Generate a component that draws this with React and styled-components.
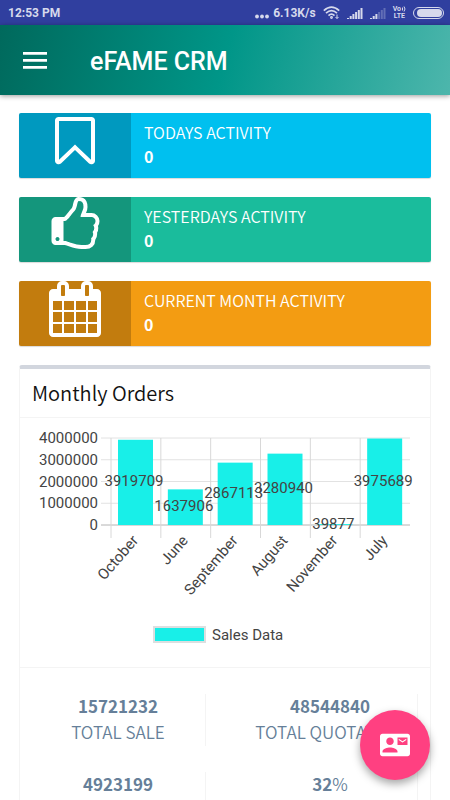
import React from 'react';
import styled, { createGlobalStyle } from 'styled-components';
import { MdContactMail } from 'react-icons/md';

const GlobalStyle = createGlobalStyle`
  * {
    box-sizing: border-box;
  }
  body {
    margin: 0;
    background-color: #fff;
    font-family: 'Noto Sans CJK SC', 'Open Sans', sans-serif;
  }
`;

const Page = styled.div`
  display: flex;
  flex-direction: column;
  height: 100vh;
  overflow: hidden;
`;

const StatusBar = styled.div`
  display: flex;
  flex-shrink: 0;
  align-items: center;
  justify-content: space-between;
  height: 25px;
  padding: 0 6px 0 8px;
  background-color: #303f9f;
  color: #d6d9ec;
  font-family: Roboto, sans-serif;
  font-size: 12px;
  font-weight: 700;
`;

const StatusIcons = styled.div`
  display: flex;
  align-items: center;
  gap: 7px;
`;

const Speed = styled.span`
  display: flex;
  align-items: center;
  gap: 4px;
`;

const Network = styled.span`
  display: flex;
  flex-direction: column;
  align-items: center;
  font-size: 7px;
  line-height: 7px;
`;

const Voice = styled.span`
  display: flex;
  align-items: center;
  gap: 1px;
`;

const Battery = styled.span`
  width: 31px;
  height: 12px;
  border: 1px solid #d6d9ec;
  border-radius: 6px;
  padding: 1px 1px 1px 3px;

  &::before {
    content: '';
    display: block;
    height: 8px;
    border-radius: 4px;
    background-color: #d6d9ec;
  }
`;

const AppBar = styled.header`
  position: relative;
  display: flex;
  flex-shrink: 0;
  align-items: center;
  gap: 43px;
  height: 70px;
  padding: 2px 23px 0;
  background: linear-gradient(105deg, #00695c 0%, #009688 50%, #4db6ac 100%);
  box-shadow: 0 1px 5px rgba(0, 0, 0, 0.4);
`;

const MenuButton = styled.button`
  display: flex;
  padding: 0;
  border: 0;
  background: none;
  cursor: pointer;
`;

const AppTitle = styled.h1`
  margin: 0;
  color: #fff;
  font-family: Roboto, sans-serif;
  font-size: 25px;
  font-weight: 500;
`;

const Content = styled.main`
  display: flex;
  flex-direction: column;
  gap: 19px;
  padding: 18px 19px;
`;

const InfoBox = styled.section`
  display: flex;
  flex-shrink: 0;
  height: 65px;
  overflow: hidden;
  border-radius: 2px;
  background-color: ${(props) => props.$color};
  box-shadow: 0 1px 1px rgba(0, 0, 0, 0.15);
`;

const InfoIcon = styled.div`
  display: flex;
  justify-content: center;
  width: 112px;
  background-color: rgba(0, 0, 0, 0.2);
`;

const InfoText = styled.div`
  display: flex;
  flex-direction: column;
  padding: 7px 13px;
  color: #fff;
  font-size: 16px;
  font-weight: 350;
  line-height: 24px;

  strong {
    font-weight: 700;
  }
`;

const Box = styled.section`
  flex-shrink: 0;
  border: 1px solid #f4f4f4;
  border-top: 4px solid #d2d6de;
  border-radius: 3px;
`;

const BoxTitle = styled.h2`
  margin: 0;
  padding: 0 12px;
  border-bottom: 1px solid #f4f4f4;
  color: #111;
  font-size: 20px;
  font-weight: 350;
  line-height: 48px;
`;

const ChartArea = styled.div`
  border-bottom: 1px solid #f4f4f4;

  svg {
    display: block;
    width: 100%;
  }
`;

const Stats = styled.div`
  display: grid;
  grid-template-columns: 1fr 1fr;
  gap: 26px 37px;
  padding: 26px 12px 26px 11px;
`;

const Stat = styled.div`
  display: flex;
  flex-direction: column;
  align-items: center;
  gap: 2px;
  height: 52px;
  border-right: 1px solid #f4f4f4;
  color: #667f99;
  font-size: 17px;
  font-weight: 350;
  line-height: 24px;
  white-space: nowrap;

  strong {
    font-weight: 700;
  }
`;

const Fab = styled.button`
  position: fixed;
  right: 20px;
  bottom: 20px;
  display: flex;
  align-items: center;
  justify-content: center;
  width: 70px;
  height: 70px;
  border: 0;
  border-radius: 50%;
  background-color: #ff4081;
  color: #fff;
  box-shadow: 0 4px 9px rgba(0, 0, 0, 0.35);
  cursor: pointer;
`;

const icons = {
  bookmark: {
    viewBox: '0 0 1792 1792',
    path: 'M1408 256h-1024v1242l423-406 89-85 89 85 423 406v-1242zm12-128q23 0 44 9 33 13 52.5 41t19.5 62v1289q0 34-19.5 62t-52.5 41q-19 8-44 8-48 0-83-32l-441-424-441 424q-36 33-83 33-23 0-44-9-33-13-52.5-41t-19.5-62v-1289q0-34 19.5-62t52.5-41q21-9 44-9h1048z',
  },
  thumb: {
    viewBox: '-80 0 1792 1792',
    path: 'M320 1344q0-26-19-45t-45-19-45 19-19 45 19 45 45 19 45-19 19-45zm1152-576q0-51-39-89.5t-89-38.5h-352q0-58 48-159.5t48-160.5q0-98-32-145t-128-47q-26 26-38 85t-30.5 125.5-59.5 109.5q-22 23-77 91-4 5-23 30t-31.5 41-34.5 42.5-40 44-38.5 35.5-40 27-35.5 9h-32v640h32q13 0 31.5 3t33 6.5 38 11 35 11.5 35.5 12.5 29 10.5q211 73 342 73h121q192 0 192-167 0-26-5-56 30-16 47.5-52.5t17.5-73.5-18-69q53-50 53-119 0-25-10-55.5t-25-47.5q32-1 53.5-47t21.5-81zm128-1q0 89-49 163 9 33 9 69 0 77-38 144 3 21 3 43 0 101-60 178 1 139-85 219.5t-227 80.5h-129q-96 0-189.5-22.5t-216.5-65.5q-116-40-138-40h-288q-53 0-90.5-37.5t-37.5-90.5v-640q0-53 37.5-90.5t90.5-37.5h274q36-24 137-155 58-75 107-128 24-25 35.5-85.5t30.5-126.5 62-108q39-37 90-37 84 0 151 32.5t102 101.5 35 186q0 93-48 192h176q104 0 180 76t76 179z',
  },
  calendar: {
    viewBox: '0 0 1792 1792',
    path: 'M192 1664h288v-288h-288v288zm352 0h320v-288h-320v288zm-352-352h288v-320h-288v320zm352 0h320v-320h-320v320zm-352-384h288v-288h-288v288zm736 736h320v-288h-320v288zm-384-736h320v-288h-320v288zm768 736h288v-288h-288v288zm-384-352h320v-320h-320v320zm-352-864v-288q0-13-9.5-22.5t-22.5-9.5h-64q-13 0-22.5 9.5t-9.5 22.5v288q0 13 9.5 22.5t22.5 9.5h64q13 0 22.5-9.5t9.5-22.5zm736 864h288v-320h-288v320zm-384-384h320v-288h-320v288zm384 0h288v-288h-288v288zm32-480v-288q0-13-9.5-22.5t-22.5-9.5h-64q-13 0-22.5 9.5t-9.5 22.5v288q0 13 9.5 22.5t22.5 9.5h64q13 0 22.5-9.5t9.5-22.5zm384-64v1280q0 52-38 90t-90 38h-1408q-52 0-90-38t-38-90v-1280q0-52 38-90t90-38h128v-96q0-66 47-113t113-47h64q66 0 113 47t47 113v96h384v-96q0-66 47-113t113-47h64q66 0 113 47t47 113v96h128q52 0 90 38t38 90z',
  },
};

const activities = [
  { label: 'TODAYS ACTIVITY', value: 0, color: '#00c0ef', icon: 'bookmark' },
  { label: 'YESTERDAYS ACTIVITY', value: 0, color: '#1abc9c', icon: 'thumb' },
  { label: 'CURRENT MONTH ACTIVITY', value: 0, color: '#f39c12', icon: 'calendar' },
];

const orders = [
  { month: 'October', total: 3919709 },
  { month: 'June', total: 1637906 },
  { month: 'September', total: 2867113 },
  { month: 'August', total: 3280940 },
  { month: 'November', total: 39877 },
  { month: 'July', total: 3975689 },
];

const stats = [
  { value: '15721232', label: 'TOTAL SALE' },
  { value: '48544840', label: 'TOTAL QUOTATION' },
  { value: '4923199' },
  { value: '32', unit: '%' },
];

function Signal({ level }) {
  return (
    <svg width="16" height="12" viewBox="0 0 16 12" fill="#d6d9ec">
      {[1, 3, 5, 7, 9, 11].map((h, i) => (
        <rect key={h} x={i * 2.7} y={12 - h} width="2" height={h} opacity={i < level ? 1 : 0.3} />
      ))}
    </svg>
  );
}

function OrdersChart() {
  const left = 91;
  const top = 20;
  const bottom = 107;
  const step = 299 / 6;
  const scale = (bottom - top) / 4000000;

  return (
    <svg viewBox="0 0 410 249" fontFamily="Roboto, sans-serif" fontSize="15" fill="#444">
      {[4000000, 3000000, 2000000, 1000000, 0].map((tick) => {
        const y = bottom - tick * scale;
        return (
          <g key={tick}>
            <line x1="81" x2="390" y1={y} y2={y} stroke={tick ? '#e2e2e2' : '#b4b4b4'} />
            <text x="78" y={y + 5} textAnchor="end">{tick}</text>
          </g>
        );
      })}
      {orders.map((o, i) => (
        <line
          key={o.month}
          x1={left + i * step}
          x2={left + i * step}
          y1={top}
          y2={bottom + 13}
          stroke="#d8d8d8"
        />
      ))}
      {orders.map((o, i) => (
        <rect
          key={o.month}
          x={left + i * step + 7}
          y={bottom - o.total * scale}
          width="35"
          height={o.total * scale}
          fill="#18efe8"
        />
      ))}
      {orders.map((o, i) => {
        const x = left + i * step + 23;
        return (
          <g key={o.month}>
            <text x={x} y={bottom - (o.total * scale) / 2 + 4} textAnchor="middle">{o.total}</text>
            <text textAnchor="end" transform={`translate(${x + 5} 123) rotate(-49)`}>{o.month}</text>
          </g>
        );
      })}
      <rect x="134" y="209" width="51" height="15" fill="#18efe8" stroke="#dcdfe0" strokeWidth="2" />
      <text x="192" y="222">Sales Data</text>
    </svg>
  );
}

function App() {
  return (
    <Page>
      <GlobalStyle />
      <StatusBar>
        <span>12:53 PM</span>
        <StatusIcons>
          <Speed>
            <svg width="14" height="12" viewBox="0 0 14 12" fill="#d6d9ec">
              <circle cx="2" cy="9.500" r="1.900" />
              <circle cx="7" cy="9.500" r="1.900" />
              <circle cx="12" cy="9.500" r="1.900" />
            </svg>
            6.13K/s
          </Speed>
          <svg width="17" height="13" viewBox="0 0 17 13" fill="none" stroke="#d6d9ec" strokeWidth="1.700">
            <path d="M0.800 4.600Q8.500 -2.400 16.200 4.600M3 7.200Q8.500 2.200 14 7.200M5.500 9.600Q8.500 6.800 11.500 9.600" />
            <circle cx="8.500" cy="11.500" r="0.600" />
            <path d="M14 8.500v4M12.500 11l1.500 1.500 1.500-1.500" strokeWidth="1" />
          </svg>
          <Signal level={6} />
          <Signal level={3} />
          <Network>
            <Voice>
              Vo
              <svg width="4" height="6" viewBox="0 0 4 6" fill="none" stroke="#d6d9ec">
                <path d="M0.500 1.500v3M2 0.500q2 2.500 0 5" />
              </svg>
            </Voice>
            <span>LTE</span>
          </Network>
          <Battery />
        </StatusIcons>
      </StatusBar>
      <AppBar>
        <MenuButton aria-label="Menu">
          <svg width="24" height="18" viewBox="0 0 24 18" fill="#fff">
            <path d="M0 0h24v2.800H0zM0 7h24v2.800H0zM0 14h24v2.800H0z" />
          </svg>
        </MenuButton>
        <AppTitle>eFAME CRM</AppTitle>
      </AppBar>
      <Content>
        {activities.map((a) => (
          <InfoBox key={a.label} $color={a.color}>
            <InfoIcon>
              <svg width="56" height="56" viewBox={icons[a.icon].viewBox} fill="#fff">
                <path d={icons[a.icon].path} />
              </svg>
            </InfoIcon>
            <InfoText>
              <span>{a.label}</span>
              <strong>{a.value}</strong>
            </InfoText>
          </InfoBox>
        ))}
        <Box>
          <BoxTitle>Monthly Orders</BoxTitle>
          <ChartArea>
            <OrdersChart />
          </ChartArea>
          <Stats>
            {stats.map((s) => (
              <Stat key={s.value}>
                <span>
                  <strong>{s.value}</strong>
                  {s.unit}
                </span>
                {s.label && <span>{s.label}</span>}
              </Stat>
            ))}
          </Stats>
        </Box>
      </Content>
      <Fab aria-label="Contacts">
        <MdContactMail size={30} />
      </Fab>
    </Page>
  );
}

export default App;
